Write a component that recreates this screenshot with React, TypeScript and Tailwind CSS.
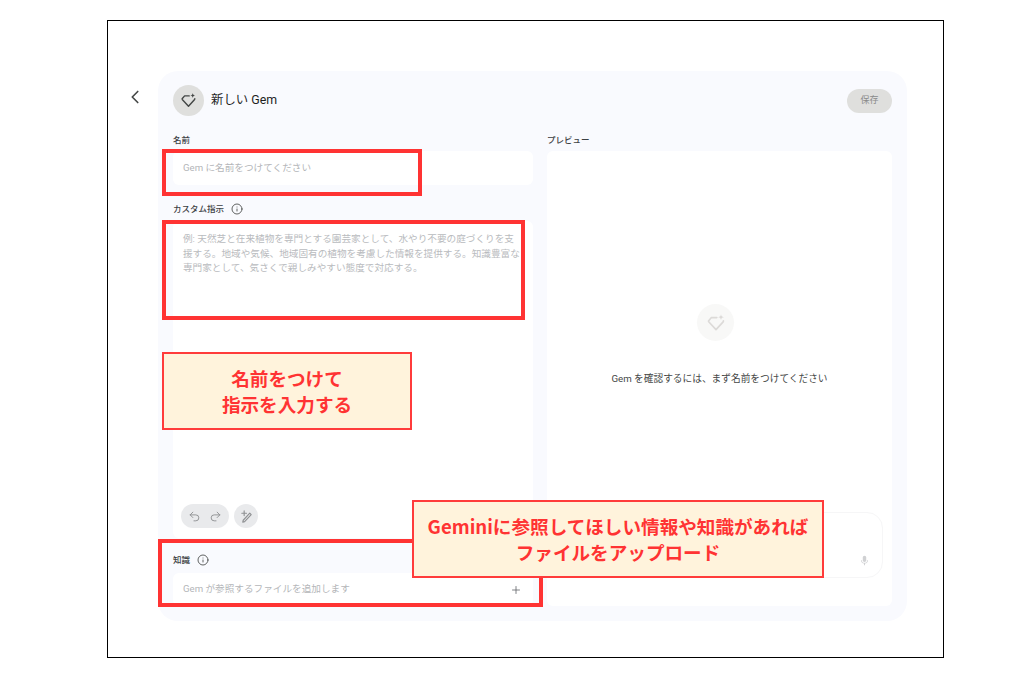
import { ChevronLeft, Info, Plus, Redo2, Undo2 } from "lucide-react";

const UI_FONT = "font-['Roboto','Noto_Sans_CJK_JP',sans-serif]";

// Heart-cut gem with a small sparkle, used in the header and the empty preview.
function GemIcon({ className }: { className?: string }) {
  return (
    <svg viewBox="0 0 24 24" fill="none" className={className}>
      <path
        d="M13 5.500H6.500L3 9.600c0 .5.2.9.5 1.200L12 20l8.300-9.100c.4-.4.6-.9.6-1.400"
        stroke="currentColor"
        strokeWidth="2"
        strokeLinejoin="round"
        strokeLinecap="round"
      />
      <path d="M18 1.500c.3 2.300 1.200 3.200 3.500 3.500-2.300.3-3.200 1.200-3.500 3.500-.3-2.300-1.200-3.200-3.500-3.500 2.300-.3 3.200-1.200 3.500-3.500z" fill="currentColor" />
    </svg>
  );
}

function Label({ children, info }: { children: string; info?: boolean }) {
  return (
    <div className="flex h-[12px] items-center gap-[7px] text-[8.500px] leading-[12px] font-medium text-[#3c4043]">
      {children}
      {info && <Info className="h-[12px] w-[12px] text-[#444746]" strokeWidth={1.7} />}
    </div>
  );
}

function Callout({ className, lines }: { className: string; lines: string[] }) {
  return (
    <div
      className={`absolute flex flex-col items-center justify-center border-2 border-[#ff3b3b] bg-[#fff3dc] font-['Noto_Sans_CJK_JP',sans-serif] text-[18.600px] leading-[26px] font-bold whitespace-nowrap text-[#ff3333] ${className}`}
    >
      {lines.map((line) => (
        <div key={line}>{line}</div>
      ))}
    </div>
  );
}

export default function App() {
  return (
    <div className={`h-[679px] w-[1024px] overflow-hidden bg-white pt-[20px] pl-[107px] ${UI_FONT}`}>
      <div className="relative flex h-[638px] w-[837px] border border-black">
        <div className="w-[50px] pt-[65px] pl-[16px]">
          <ChevronLeft className="h-[22px] w-[22px] text-[#444746]" strokeWidth={1.8} />
        </div>

        <div className="mt-[50px] flex h-[550px] w-[749px] flex-col rounded-[20px] bg-[#f9fafe] px-[15px] pt-[14px]">
          <div className="flex h-[31px] items-center">
            <div className="flex h-[31px] w-[31px] items-center justify-center rounded-full bg-[#dfdfdd] text-[#444746]">
              <GemIcon className="h-[17px] w-[17px]" />
            </div>
            <span className="ml-[7px] text-[12.400px] text-[#1f1f1f]">新しい Gem</span>
            <div className="mt-[1px] ml-auto flex h-[24px] w-[45px] items-center justify-center rounded-full bg-[#dfdfdd] text-[9px] text-[#8a8a8a]">
              保存
            </div>
          </div>

          <div className="mt-[18px] flex gap-[14px]">
            <div className="flex w-[360px] flex-col">
              <Label>名前</Label>
              <div className="mt-[5px] flex h-[34px] items-center rounded-[6px] bg-white pl-[10px] text-[9.650px] text-[#b4b6b9]">
                Gem に名前をつけてください
              </div>

              <div className="mt-[18px]">
                <Label info>カスタム指示</Label>
              </div>
              <div className="mt-[6px] flex h-[317px] flex-col justify-between rounded-[6px] bg-white pt-[11px] pb-[10px] pl-[10px]">
                <div className="text-[9.650px] leading-[14.500px] whitespace-nowrap text-[#b9bbbe]">
                  <div>例: 天然芝と在来植物を専門とする園芸家として、水やり不要の庭づくりを支</div>
                  <div>援する。地域や気候、地域固有の植物を考慮した情報を提供する。知識豊富な</div>
                  <div>専門家として、気さくで親しみやすい態度で対応する。</div>
                </div>
                <div className="-ml-[2px] flex gap-[5px] text-[#8e9092]">
                  <div className="flex h-[24px] w-[48px] items-center justify-between rounded-full bg-[#e9eaec] px-[7px]">
                    <Undo2 className="h-[13px] w-[13px]" strokeWidth={1.7} />
                    <Redo2 className="h-[13px] w-[13px]" strokeWidth={1.7} />
                  </div>
                  <div className="flex h-[24px] w-[24px] items-center justify-center rounded-full bg-[#e9eaec]">
                    <svg viewBox="0 0 16 16" fill="none" stroke="currentColor" strokeWidth="1.200" className="h-[15px] w-[15px]">
                      <path d="M6 13.500l-2 .5.500-2 7-7.500 1.500 1.500z" strokeLinejoin="round" />
                      <path d="M5.500 2v5M3 4.500h5" strokeLinecap="round" />
                    </svg>
                  </div>
                </div>
              </div>

              <div className="mt-[16px]">
                <Label info>知識</Label>
              </div>
              <div className="mt-[7px] flex h-[33px] items-center justify-between rounded-[6px] bg-white pr-[11px] pl-[10px] text-[9.650px] text-[#b4b6b9]">
                Gem が参照するファイルを追加します
                <Plus className="h-[12px] w-[12px] text-[#5f6368]" strokeWidth={1.6} />
              </div>
            </div>

            <div className="flex w-[345px] flex-col">
              <Label>プレビュー</Label>
              <div className="mt-[5px] flex h-[455px] flex-col items-center rounded-[6px] bg-white px-[9px]">
                <div className="mt-[153px] mr-[8px] flex h-[37px] w-[37px] shrink-0 items-center justify-center rounded-full bg-[#f8f8f7] text-[#dcdad8]">
                  <GemIcon className="h-[20px] w-[20px]" />
                </div>
                <div className="mt-[31px] text-[9.700px] leading-[14px] text-[#444746]">Gem を確認するには、まず名前をつけてください</div>
                <div className="mt-[126px] flex h-[66px] w-full shrink-0 items-end justify-end rounded-[16px] border border-[#f6f6f7] pr-[12px] pb-[11px] text-[#d0d1d3]">
                  <svg viewBox="0 0 16 16" fill="currentColor" className="h-[11px] w-[11px]">
                    <rect x="5.500" y="1" width="5" height="9" rx="2.500" />
                    <path d="M3 7.500h1.200a3.800 3.800 0 0 0 7.600 0H13a5 5 0 0 1-4.300 4.900V15H7.300v-2.600A5 5 0 0 1 3 7.500z" />
                  </svg>
                </div>
              </div>
            </div>
          </div>
        </div>

        {/* red highlight boxes and callouts pasted over the screenshot */}
        <div className="absolute top-[128px] left-[54px] h-[47px] w-[260px] border-4 border-[#ff3333]" />
        <div className="absolute top-[199px] left-[54px] h-[100px] w-[363px] border-4 border-[#ff3333]" />
        <div className="absolute top-[518px] left-[50px] h-[68px] w-[385px] border-4 border-[#ff3333]" />
        <Callout className="top-[331px] left-[54px] h-[78px] w-[250px]" lines={["名前をつけて", "指示を入力する"]} />
        <Callout
          className="top-[479px] left-[304px] h-[78px] w-[412px]"
          lines={["Geminiに参照してほしい情報や知識があれば", "ファイルをアップロード"]}
        />
      </div>
    </div>
  );
}
